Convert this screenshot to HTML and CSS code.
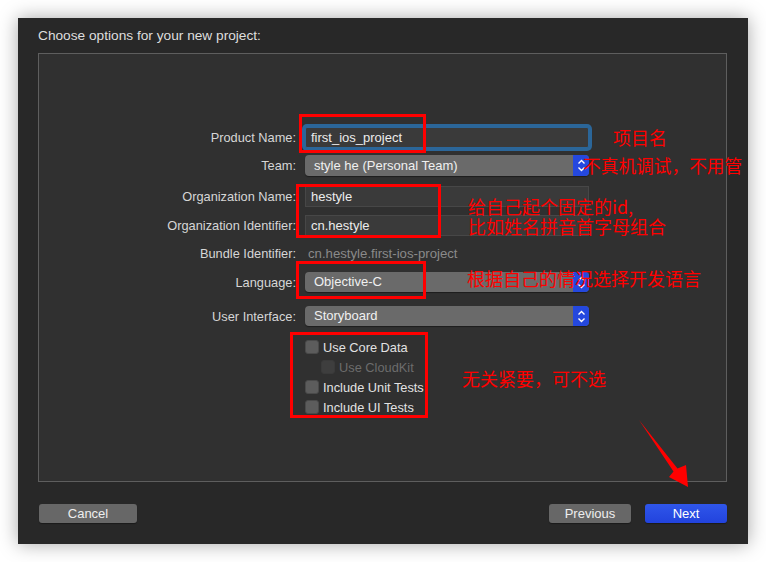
FILE: index.html
```html
<!DOCTYPE html>
<html>
<head>
<meta charset="utf-8">
<link rel="stylesheet" href="styles.css">
</head>
<body>
<div class="window">
  <div class="title">Choose options for your new project:</div>
  <div class="panel">
    <div class="form">
      <div class="row r-product">
        <div class="label">Product Name:</div>
        <div class="field focus">first_ios_project</div>
      </div>
      <div class="row r-team">
        <div class="label">Team:</div>
        <div class="popup"><span>style he (Personal Team)</span><span class="stepper"><svg width="9" height="13" viewBox="0 0 9 13"><path d="M1.5 4.5 L4.5 1.5 L7.5 4.5 M1.5 8.5 L4.5 11.5 L7.5 8.5" fill="none" stroke="#fff" stroke-width="1.4"/></svg></span></div>
      </div>
      <div class="row r-orgname">
        <div class="label">Organization Name:</div>
        <div class="field">hestyle</div>
      </div>
      <div class="row r-orgid">
        <div class="label">Organization Identifier:</div>
        <div class="field">cn.hestyle</div>
      </div>
      <div class="row r-bundle">
        <div class="label">Bundle Identifier:</div>
        <div class="static">cn.hestyle.first-ios-project</div>
      </div>
      <div class="row r-lang">
        <div class="label">Language:</div>
        <div class="popup"><span>Objective-C</span><span class="stepper"><svg width="9" height="13" viewBox="0 0 9 13"><path d="M1.5 4.5 L4.5 1.5 L7.5 4.5 M1.5 8.5 L4.5 11.5 L7.5 8.5" fill="none" stroke="#fff" stroke-width="1.4"/></svg></span></div>
      </div>
      <div class="row r-ui">
        <div class="label">User Interface:</div>
        <div class="popup"><span>Storyboard</span><span class="stepper"><svg width="9" height="13" viewBox="0 0 9 13"><path d="M1.5 4.5 L4.5 1.5 L7.5 4.5 M1.5 8.5 L4.5 11.5 L7.5 8.5" fill="none" stroke="#fff" stroke-width="1.4"/></svg></span></div>
      </div>
      <div class="checks">
        <div class="check"><span class="box"></span>Use Core Data</div>
        <div class="check sub disabled"><span class="box"></span>Use CloudKit</div>
        <div class="check"><span class="box"></span>Include Unit Tests</div>
        <div class="check"><span class="box"></span>Include UI Tests</div>
      </div>
    </div>
  </div>
  <div class="footer">
    <div class="btn cancel">Cancel</div>
    <div class="right">
      <div class="btn prev">Previous</div>
      <div class="btn next">Next</div>
    </div>
  </div>
</div>

<div class="redbox b1"></div>
<div class="redbox b2"></div>
<div class="redbox b3"></div>
<div class="redbox b4"></div>

<div class="note n1">项目名</div>
<div class="note n2">不真机调试，不用管</div>
<div class="note n3">给自己起个固定的id,<br>比如姓名拼音首字母组合</div>
<div class="note n4">根据自己的情况选择开发语言</div>
<div class="note n5">无关紧要，可不选</div>

<svg class="arrow" width="766" height="562" viewBox="0 0 766 562">
  <polygon points="639,420 677.5,468.5 686,465 688,487 669,477 673.5,471.5" fill="#ff0000"/>
</svg>
</body>
</html>
```
FILE: styles.css
```css
html, body {
  margin: 0;
  padding: 0;
}
body {
  width: 766px;
  height: 562px;
  background: #ffffff;
  position: relative;
  overflow: hidden;
  font-family: "Liberation Sans", Arial, sans-serif;
}
.window {
  position: absolute;
  left: 18px;
  top: 18px;
  width: 730px;
  height: 526px;
  background: #282828;
  box-shadow: 0 0 18px rgba(0,0,0,0.35);
  box-sizing: border-box;
  padding: 10px 21px 0 20px;
  display: flex;
  flex-direction: column;
}
.title {
  color: #dedede;
  font-size: 13.7px;
  line-height: 16px;
  height: 16px;
}
.panel {
  margin-top: 9px;
  height: 429px;
  box-sizing: border-box;
  border: 1px solid #5e5e5e;
  background: #303030;
}
.form {
  padding-top: 73px;
  display: flex;
  flex-direction: column;
}
.row {
  display: grid;
  grid-template-columns: 257px 284px;
  column-gap: 9px;
  align-items: center;
}
.label {
  text-align: right;
  color: #d6d6d6;
  font-size: 12.8px;
}
.field {
  height: 21px;
  box-sizing: border-box;
  background: #3a3a3a;
  border: 1px solid #474747;
  color: #ececec;
  font-size: 13px;
  line-height: 19px;
  padding-left: 5px;
}
.field.focus {
  border-radius: 2px;
  box-shadow: 0 0 0 3px #2b6699;
  border-color: #2b6699;
}
.static {
  color: #8a8a8a;
  font-size: 13.2px;
  padding-left: 3px;
}
.popup {
  height: 20px;
  box-sizing: border-box;
  background: #6a6a6a;
  border-radius: 4px;
  color: #f0f0f0;
  font-size: 13px;
  line-height: 20px;
  padding-left: 9px;
  display: flex;
  justify-content: space-between;
  box-shadow: 0 1px 1px rgba(0,0,0,0.4);
}
.stepper {
  width: 16px;
  height: 20px;
  background: #2448de;
  border-radius: 0 4px 4px 0;
  display: flex;
  align-items: center;
  justify-content: center;
}
.stepper svg { display: block; }
.r-product { margin-top: 0; height: 21px; }
.r-team { margin-top: 7px; height: 21px; }
.r-team .popup { height: 21px; line-height: 21px; }
.r-team .stepper { height: 21px; }
.r-orgname { margin-top: 10px; height: 21px; }
.r-orgid { margin-top: 8px; height: 21px; }
.r-bundle { margin-top: 9px; height: 16px; }
.r-lang { margin-top: 11px; height: 20px; }
.r-ui { margin-top: 14px; height: 20px; }
.checks {
  margin-top: 14px;
  margin-left: 266px;
  display: flex;
  flex-direction: column;
  gap: 6px;
}
.check {
  display: flex;
  align-items: center;
  height: 14px;
  color: #e2e2e2;
  font-size: 12.8px;
}
.box {
  width: 14px;
  height: 14px;
  box-sizing: border-box;
  border-radius: 3px;
  background: #5c5c5c;
  border: 1px solid #4a4a4a;
  margin-right: 4px;
  flex: none;
}
.check.sub { margin-left: 16px; }
.check.disabled { color: #6c6c6c; }
.check.disabled .box { background: #3e3e3e; border-color: #3a3a3a; }
.footer {
  margin-top: 22px;
  display: flex;
  justify-content: space-between;
  padding-left: 1px;
}
.right {
  display: flex;
  gap: 14px;
}
.btn {
  height: 19px;
  box-sizing: border-box;
  border-radius: 3px;
  color: #eeeeee;
  font-size: 13px;
  line-height: 19px;
  text-align: center;
  background: #676767;
  box-shadow: 0 1px 1px rgba(0,0,0,0.35);
}
.cancel { width: 98px; }
.prev { width: 82px; }
.next {
  width: 82px;
  background: linear-gradient(#2f56ea, #2243dd);
  color: #ffffff;
}
.redbox {
  position: absolute;
  box-sizing: border-box;
  border: 3px solid #ff0000;
}
.b1 { left: 299px; top: 114px; width: 127px; height: 39px; }
.b2 { left: 296px; top: 184px; width: 145px; height: 54px; }
.b3 { left: 296px; top: 261px; width: 130px; height: 38px; }
.b4 { left: 290px; top: 332px; width: 138px; height: 86px; }
.note {
  position: absolute;
  color: #ff0000;
  font-family: "Noto Sans CJK SC", "Liberation Sans", sans-serif;
  font-size: 18px;
  line-height: 20px;
  white-space: nowrap;
}
.n1 { left: 613px; top: 127px; }
.n2 { left: 583px; top: 155px; font-size: 17.7px; }
.n3 { left: 468px; top: 196px; }
.n4 { left: 467px; top: 268px; }
.n5 { left: 462px; top: 368px; }
.arrow {
  position: absolute;
  left: 0;
  top: 0;
  pointer-events: none;
}
```
